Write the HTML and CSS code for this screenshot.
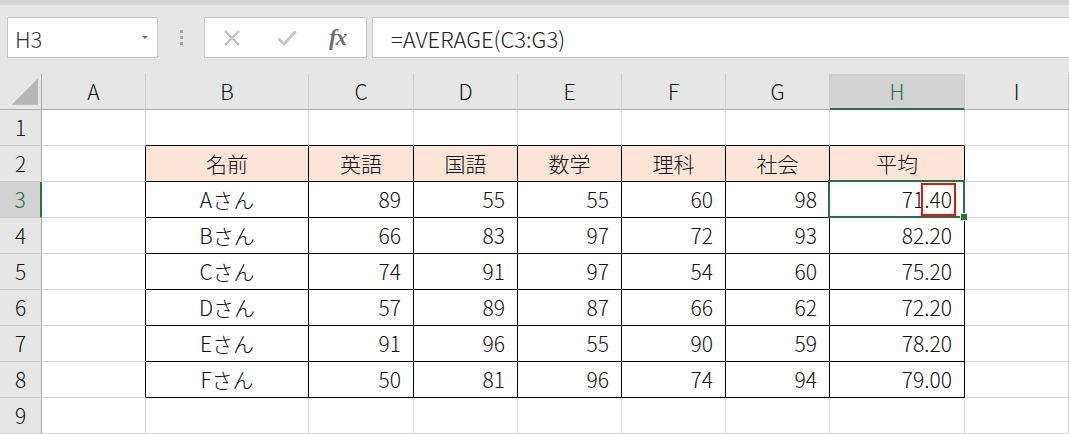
FILE: index.html
```html
<!DOCTYPE html>
<html lang="ja">
<head>
<meta charset="utf-8">
<title>AVERAGE</title>
<link rel="stylesheet" href="styles.css">
</head>
<body>
<div class="app">
  <div class="topbar"></div>
  <div class="toolbar">
    <div class="namebox">
      <span class="namebox-text">H3</span>
      <span class="namebox-arrow"></span>
    </div>
    <div class="grip"><span></span><span></span><span></span></div>
    <div class="fbuttons">
      <svg class="ic-x" width="18" height="16" viewBox="0 0 18 16"><path d="M2 1 L16 15 M16 1 L2 15" stroke="#bcbcbc" stroke-width="2.2" fill="none"/></svg>
      <svg class="ic-check" width="20" height="16" viewBox="0 0 20 16"><path d="M1.5 8.5 L7 14 L18.5 1.5" stroke="#c6c6c6" stroke-width="3" fill="none"/></svg>
      <span class="fx">fx</span>
    </div>
    <div class="formula">=AVERAGE(C3:G3)</div>
  </div>
  <div class="sheet">
    <div class="corner"><svg width="42" height="36" viewBox="0 0 42 36"><polygon points="39,4 39,31 12,31" fill="#b5b5b5"/></svg></div>
    <div class="ch">A</div><div class="ch">B</div><div class="ch">C</div><div class="ch">D</div><div class="ch">E</div><div class="ch">F</div><div class="ch">G</div><div class="ch ch-sel">H</div><div class="ch">I</div>

    <div class="rh">1</div><div class="c"></div><div class="c tt"></div><div class="c tt"></div><div class="c tt"></div><div class="c tt"></div><div class="c tt"></div><div class="c tt"></div><div class="c tt"></div><div class="c"></div>

    <div class="rh">2</div><div class="c tl"></div><div class="c t th">名前</div><div class="c t th">英語</div><div class="c t th">国語</div><div class="c t th">数学</div><div class="c t th">理科</div><div class="c t th">社会</div><div class="c t th">平均</div><div class="c"></div>

    <div class="rh rh-sel">3</div><div class="c tl"></div><div class="c t ctr">Aさん</div><div class="c t n">89</div><div class="c t n">55</div><div class="c t n">55</div><div class="c t n">60</div><div class="c t n">98</div><div class="c t n active">71.40<span class="mark"></span><span class="handle"></span></div><div class="c"></div>

    <div class="rh">4</div><div class="c tl"></div><div class="c t ctr">Bさん</div><div class="c t n">66</div><div class="c t n">83</div><div class="c t n">97</div><div class="c t n">72</div><div class="c t n">93</div><div class="c t n">82.20</div><div class="c"></div>

    <div class="rh">5</div><div class="c tl"></div><div class="c t ctr">Cさん</div><div class="c t n">74</div><div class="c t n">91</div><div class="c t n">97</div><div class="c t n">54</div><div class="c t n">60</div><div class="c t n">75.20</div><div class="c"></div>

    <div class="rh">6</div><div class="c tl"></div><div class="c t ctr">Dさん</div><div class="c t n">57</div><div class="c t n">89</div><div class="c t n">87</div><div class="c t n">66</div><div class="c t n">62</div><div class="c t n">72.20</div><div class="c"></div>

    <div class="rh">7</div><div class="c tl"></div><div class="c t ctr">Eさん</div><div class="c t n">91</div><div class="c t n">96</div><div class="c t n">55</div><div class="c t n">90</div><div class="c t n">59</div><div class="c t n">78.20</div><div class="c"></div>

    <div class="rh">8</div><div class="c tl"></div><div class="c t ctr">Fさん</div><div class="c t n">50</div><div class="c t n">81</div><div class="c t n">96</div><div class="c t n">74</div><div class="c t n">94</div><div class="c t n">79.00</div><div class="c"></div>

    <div class="rh">9</div><div class="c"></div><div class="c"></div><div class="c"></div><div class="c"></div><div class="c"></div><div class="c"></div><div class="c"></div><div class="c"></div><div class="c"></div>
  </div>
</div>
</body>
</html>
```

FILE: styles.css
```css
* { box-sizing: border-box; }
html, body { margin: 0; padding: 0; }
body {
  width: 1069px;
  height: 434px;
  overflow: hidden;
  background: #ffffff;
  font-family: "Noto Sans CJK JP", "Noto Sans", sans-serif;
  font-weight: 300;
  color: #111;
}
.app { width: 1069px; }
.topbar {
  height: 5px;
  background: #d4d4d4;
}
.toolbar {
  height: 69px;
  background: #e6e6e6;
  display: flex;
  align-items: flex-start;
  padding: 12px 0 0 7px;
}
.namebox {
  width: 151px;
  height: 41px;
  background: #fff;
  border: 1px solid #c6c6c6;
  display: flex;
  align-items: center;
  justify-content: space-between;
  padding: 0 9px 0 7px;
}
.namebox-text {
  font-size: 22px;
  color: #333;
  line-height: 1;
  padding-top: 1px;
}
.namebox-arrow {
  width: 0; height: 0;
  border-left: 3px solid transparent;
  border-right: 3px solid transparent;
  border-top: 3px solid #666;
}
.grip {
  width: 46px;
  height: 41px;
  display: flex;
  flex-direction: column;
  align-items: center;
  justify-content: center;
  gap: 3px;
}
.grip span {
  width: 3px; height: 3px;
  background: #a6a6a6;
}
.fbuttons {
  width: 163px;
  height: 41px;
  background: #fff;
  border: 1px solid #c6c6c6;
  display: flex;
  align-items: center;
  padding-left: 18px;
}
.ic-x { margin-right: 36px; }
.ic-check { margin-right: 32px; }
.fx {
  font-family: "Liberation Serif", "DejaVu Serif", serif;
  font-style: italic;
  font-weight: bold;
  font-size: 23px;
  color: #6e6e6e;
  letter-spacing: -1px;
  line-height: 1;
}
.formula {
  flex: 1;
  margin-left: 5px;
  height: 41px;
  background: #fff;
  border: 1px solid #c6c6c6;
  border-right: none;
  display: flex;
  align-items: center;
  padding-left: 18px;
  font-size: 22px;
  color: #222;
  line-height: 1;
}
.sheet {
  display: grid;
  grid-template-columns: 42px 104px 163px 105px 104px 104px 104px 104px 135px 104px;
  grid-auto-rows: 36px;
  font-size: 21px;
}
.sheet > div {
  border-right: 1px solid #d4d4d4;
  border-bottom: 1px solid #d4d4d4;
  display: flex;
  align-items: center;
  line-height: 1;
}
.corner {
  background: #e6e6e6;
  border-right-color: #ababab !important;
  border-bottom-color: #ababab !important;
}
.ch {
  background: #e6e6e6;
  justify-content: center;
  border-right-color: #cbcbcb !important;
  border-bottom-color: #ababab !important;
  color: #111;
}
.ch-sel {
  background: #d2d2d2;
  color: #217346;
  border-bottom: 2px solid #217346 !important;
  padding-top: 1px;
}
.rh {
  background: #e6e6e6;
  justify-content: center;
  border-right-color: #ababab !important;
  border-bottom-color: #cbcbcb !important;
  color: #111;
}
.rh-sel {
  background: #d2d2d2;
  color: #217346;
  border-right: 2px solid #217346 !important;
}
.tt { border-bottom-color: #000 !important; }
.tl { border-right-color: #000 !important; }
.t {
  border-right-color: #000 !important;
  border-bottom-color: #000 !important;
}
.th {
  background: #fce4d6;
  justify-content: center;
}
.ctr { justify-content: center; }
.n {
  justify-content: flex-end;
  padding-right: 12px;
}
.active { position: relative; }
.active::after {
  content: "";
  position: absolute;
  left: -2px;
  top: -2px;
  right: -1px;
  bottom: -1px;
  border: 2px solid #217346;
  pointer-events: none;
}
.mark {
  position: absolute;
  left: 91px;
  top: 1px;
  width: 35px;
  height: 33px;
  border: 2px solid #ee1111;
}
.handle {
  position: absolute;
  left: 130px;
  top: 31px;
  width: 8px;
  height: 8px;
  background: #217346;
  border: 1px solid #fff;
  z-index: 2;
}
```
